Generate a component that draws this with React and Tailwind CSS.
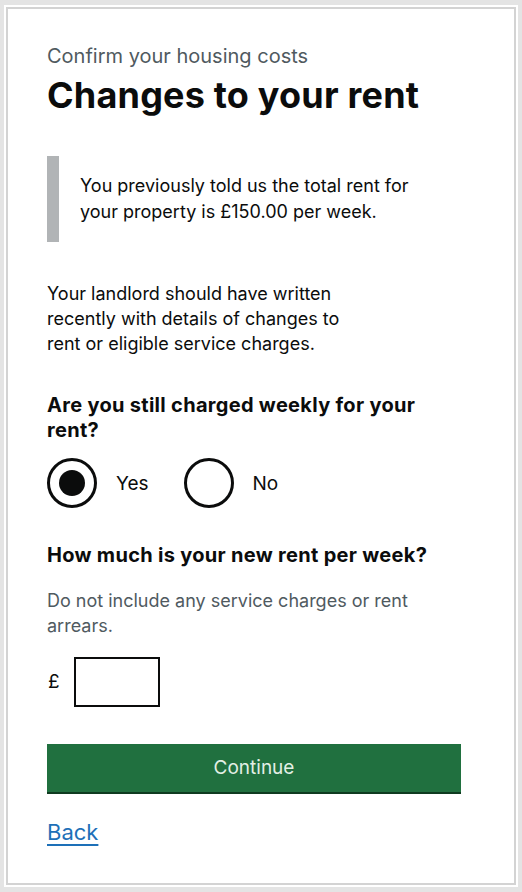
import { useState } from 'react';

const font = { fontFamily: 'Inter, "Noto Sans", Arial, sans-serif' };

const Radio = ({ label, checked, onSelect }) => (
  <label className="flex items-center gap-[19px] cursor-pointer" onClick={onSelect}>
    <span className="flex h-[50px] w-[50px] items-center justify-center rounded-full border-[3px] border-[#0b0c0c] bg-white">
      {checked && <span className="h-[26px] w-[26px] rounded-full bg-[#0b0c0c]" />}
    </span>
    <span className="text-[19px] leading-[25px] text-[#0b0c0c]">{label}</span>
  </label>
);

const App = () => {
  const [weekly, setWeekly] = useState('yes');
  const [rent, setRent] = useState('');

  return (
    <div className="min-h-screen bg-[#e4e4e4] px-[4px] pt-[5px] pb-[4px]" style={font}>
      <div className="bg-white p-[2px]">
        <div className="border-2 border-[#d3d3d3] bg-white pl-[39px] pr-[53px] pt-[35px] pb-[37px] text-[#0b0c0c]">
          <p className="text-[20px] leading-[25px] text-[#505a5f]">Confirm your housing costs</p>
          <h1 className="mt-[6px] text-[36px] leading-[40px] font-bold tracking-[0.2px]">Changes to your rent</h1>

          <div className="mt-[41px] border-l-[12px] border-[#b1b4b6] py-[17px] pl-[21px]">
            <p className="text-[18px] leading-[26px] max-w-[340px]">
              You previously told us the total rent for your property is £150.00 per week.
            </p>
          </div>

          <p className="mt-[39px] text-[18px] leading-[25px] max-w-[300px]">
            Your landlord should have written recently with details of changes to rent or eligible service charges.
          </p>

          <h2 className="mt-[37px] text-[20px] leading-[25px] font-bold tracking-[0.3px] max-w-[375px]">
            Are you still charged weekly for your rent?
          </h2>

          <div className="mt-[15px] flex gap-[35px]">
            <Radio label="Yes" checked={weekly === 'yes'} onSelect={() => setWeekly('yes')} />
            <Radio label="No" checked={weekly === 'no'} onSelect={() => setWeekly('no')} />
          </div>

          <h2 className="mt-[35px] text-[20px] leading-[25px] font-bold tracking-[0.3px]">How much is your new rent per week?</h2>
          <p className="mt-[20px] text-[18px] leading-[25px] text-[#505a5f] max-w-[370px]">
            Do not include any service charges or rent arrears.
          </p>

          <div className="mt-[19px] flex items-center gap-[14px]">
            <span className="pl-[1px] text-[19px]">£</span>
            <input
              value={rent}
              onChange={(e) => setRent(e.target.value)}
              className="h-[50px] w-[86px] border-2 border-[#0b0c0c] px-2 text-[19px] outline-none"
            />
          </div>

          <button className="mt-[37px] h-[50px] w-full bg-[#20703f] pb-[2px] text-[19px] text-[#e2efe5] shadow-[inset_0_-2px_0_#0f3b20]">
            Continue
          </button>

          <div className="mt-[26px]">
            <a href="#" className="text-[22px] leading-[25px] text-[#1d70b8] underline underline-offset-[4px] decoration-[2px]">
              Back
            </a>
          </div>
        </div>
      </div>
    </div>
  );
};

export default App;
